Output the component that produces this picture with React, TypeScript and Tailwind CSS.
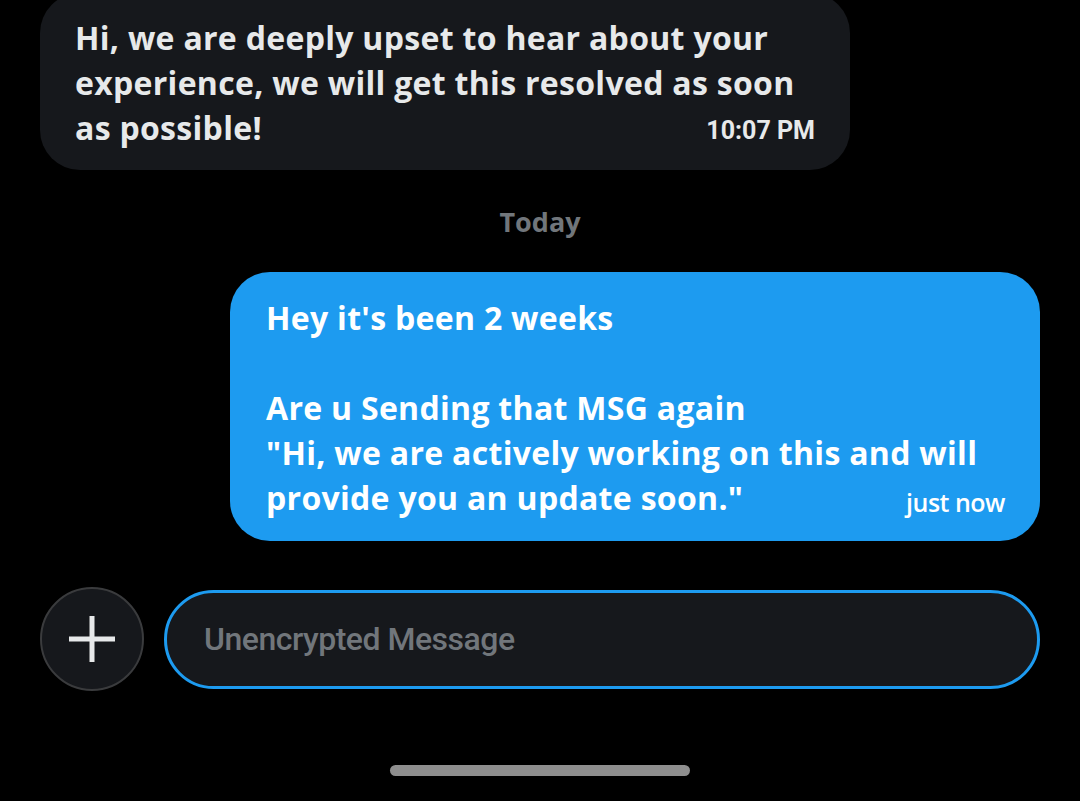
import React from 'react';

const FONT = "font-['Roboto','Liberation_Sans',sans-serif]";
const BODY = "font-['Open_Sans','Roboto',sans-serif] font-bold tracking-[0.3px]";

const App: React.FC = () => {
  return (
    <div className={`w-[1080px] h-[801px] bg-black overflow-hidden flex flex-col ${FONT}`}>
      {/* Incoming message */}
      <div className="pl-[40px] -mt-[7px]">
        <div className="w-[810px] bg-[#16181c] rounded-[40px] pl-[35px] pr-[35px] pt-[22px] pb-[20px] text-[#e7e9ea] text-[32px] leading-[45px]">
          <div className={BODY}>Hi, we are deeply upset to hear about your</div>
          <div className={BODY}>experience, we will get this resolved as soon</div>
          <div className="flex justify-between items-end">
            <span className={BODY}>as possible!</span>
            <span className="text-[25px] font-bold leading-[38px]">10:07 PM</span>
          </div>
        </div>
      </div>

      {/* Day separator */}
      <div className="mt-[36px] text-center text-[#71767b] text-[27px] font-bold leading-[32px] font-['Open_Sans','Roboto',sans-serif]">
        Today
      </div>

      {/* Outgoing message */}
      <div className="flex justify-end pr-[40px] mt-[34px]">
        <div className="w-[810px] bg-[#1d9bf0] rounded-[40px] pl-[36px] pr-[35px] pt-[23px] pb-[21px] text-white text-[32px] leading-[45px]">
          <div className={BODY}>Hey it's been 2 weeks</div>
          <div className="h-[45px]" />
          <div className={BODY}>Are u Sending that MSG again</div>
          <div className={BODY}>"Hi, we are actively working on this and will</div>
          <div className="flex justify-between items-end">
            <span className={BODY}>provide you an update soon."</span>
            <span className="text-[25px] font-semibold leading-[36px] tracking-[-0.5px] font-['Open_Sans','Roboto',sans-serif]">just now</span>
          </div>
        </div>
      </div>

      {/* Composer */}
      <div className="flex items-center gap-[20px] px-[40px] mt-[46px]">
        <button className="w-[104px] h-[104px] shrink-0 rounded-full bg-[#16181c] border-2 border-[#3a3b3d] flex items-center justify-center">
          <svg width="50" height="50" viewBox="0 0 50 50">
            <path d="M25 2v46M2 25h46" stroke="#e7e9ea" strokeWidth="5" />
          </svg>
        </button>
        <div className="flex-1 h-[99px] rounded-full border-[3px] border-[#1d9bf0] bg-[#16181c] flex items-center pl-[37px]">
          <span className="text-[#71767b] text-[32px] font-medium tracking-[-0.5px]">Unencrypted Message</span>
        </div>
      </div>

      {/* Home indicator */}
      <div className="mt-auto mb-[25px] flex justify-center">
        <div className="w-[300px] h-[11px] rounded-full bg-[#8e8e8e]" />
      </div>
    </div>
  );
};

export default App;
